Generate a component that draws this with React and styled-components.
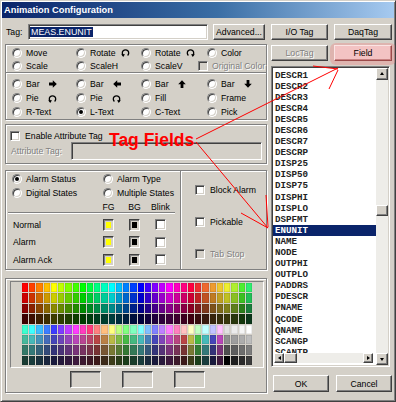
import React from 'react'
import styled, { createGlobalStyle, css } from 'styled-components'

const GlobalStyle = createGlobalStyle`
  html, body { margin: 0; padding: 0; background: #d4d0c8; }
  body {
    font-family: "Liberation Sans", Arial, sans-serif;
    font-size: 8.7px;
    color: #000;
  }
`

const raised = css`
  border: 1px solid;
  border-color: #fff #404040 #404040 #fff;
  box-shadow: inset -1px -1px #808080;
`

const sunken = css`
  border: 1px solid;
  border-color: #808080 #fff #fff #808080;
  box-shadow: inset 1px 1px #404040, inset -1px -1px #d4d0c8;
`

const disabledText = css`
  color: #808080;
  text-shadow: 1px 1px 0 #fff;
`

const Window = styled.div`
  position: relative;
  box-sizing: border-box;
  width: 396px;
  height: 402px;
  padding: 1px;
  background: #d4d0c8;
  border: 1px solid;
  border-color: #d4d0c8 #404040 #404040 #d4d0c8;
  box-shadow: inset 1px 1px #fff, inset -1px -1px #808080;
  display: flex;
  flex-direction: column;
  overflow: hidden;
`

const TitleBar = styled.div`
  height: 16px;
  display: flex;
  align-items: center;
  padding-left: 2px;
  background: linear-gradient(90deg, #0a246a 0%, #3a6ea5 55%, #a6caf0 100%);
  color: #fff;
  font-weight: bold;
  font-size: 9.3px;
`

const Body = styled.div`
  display: flex;
  gap: 4px;
  padding: 6px 2px 0 3px;
`

const LeftCol = styled.div`
  width: 262px;
  display: flex;
  flex-direction: column;
`

const RightCol = styled.div`
  width: 121px;
  display: flex;
  flex-direction: column;
`

const TagRow = styled.div`
  height: 16px;
  display: flex;
  align-items: center;
`

const TagLabel = styled.span`
  width: 22px;
  margin-left: 1px;
`

const TextField = styled.div`
  box-sizing: border-box;
  width: ${p => p.$w || 180}px;
  height: ${p => p.$h || 16}px;
  ${sunken};
  background: ${p => (p.$disabled ? '#d4d0c8' : '#fff')};
  display: flex;
  align-items: center;
  padding-left: 1px;
`

const Selected = styled.span`
  background: #0a246a;
  color: #fff;
  padding: 0 1px;
  line-height: 10px;
  font-size: 8.9px;
`

const Button = styled.div`
  position: relative;
  box-sizing: border-box;
  width: ${p => p.$w}px;
  height: ${p => p.$h || 16}px;
  margin-left: ${p => p.$ml || 0}px;
  ${raised};
  background: #d4d0c8;
  display: flex;
  align-items: center;
  justify-content: center;
  ${p => p.$disabled && disabledText};
  ${p =>
    p.$hot &&
    css`
      background: #f3c3c3;
      border-color: #fbe4e4 #9c4a4a #9c4a4a #fbe4e4;
      box-shadow: inset -1px -1px #c98383;
      &::before {
        content: '';
        position: absolute;
        inset: -3px -5px -5px -5px;
        border-radius: 6px;
        background: rgba(236, 140, 140, 0.42);
        z-index: -1;
      }
    `}
`

const ButtonRow = styled.div`
  display: flex;
  gap: ${p => p.$gap || 6}px;
  justify-content: ${p => (p.$end ? 'flex-end' : 'flex-start')};
  margin-top: ${p => p.$mt || 0}px;
  position: relative;
  z-index: 0;
`

const Panel = styled.div`
  box-sizing: border-box;
  height: ${p => p.$h}px;
  margin-top: ${p => p.$mt}px;
  border: 1px solid #808080;
  box-shadow: inset 1px 1px #fff, 1px 1px #fff;
  padding: ${p => p.$pad || 0};
  display: flex;
  flex-direction: ${p => (p.$row ? 'row' : 'column')};
`

const OptionGrid = styled.div`
  display: grid;
  grid-template-columns: ${p => p.$cols || '64px 65px 66px 1fr'};
  grid-auto-rows: ${p => p.$row}px;
  padding: ${p => p.$pad};
`

const Opt = styled.label`
  display: flex;
  align-items: center;
  gap: 4px;
  white-space: nowrap;
  margin-left: ${p => p.$shift || 0}px;
  ${p => p.$disabled && disabledText};
`

const Radio = styled.span`
  position: relative;
  box-sizing: border-box;
  flex: none;
  width: 10px;
  height: 10px;
  border-radius: 50%;
  background: #fff;
  ${sunken};
  &::after {
    content: '';
    display: ${p => (p.$on ? 'block' : 'none')};
    position: absolute;
    left: 2px;
    top: 2px;
    width: 4px;
    height: 4px;
    border-radius: 50%;
    background: #000;
  }
`

const Check = styled.span`
  box-sizing: border-box;
  flex: none;
  width: 10px;
  height: 10px;
  ${sunken};
  background: ${p => (p.$disabled ? '#d4d0c8' : '#fff')};
`

const Etched = styled.div`
  border-top: 1px solid #808080;
  border-bottom: 1px solid #fff;
`

const VEtched = styled.div`
  width: 0;
  border-left: 1px solid #808080;
  border-right: 1px solid #fff;
`

const Icon = styled.svg`
  flex: none;
  margin-left: ${p => p.$ml || 0}px;
  transform: ${p => p.$t || 'none'};
`

const AttrRow = styled.div`
  display: flex;
  align-items: center;
  gap: 5px;
  height: ${p => p.$h}px;
`

const AttrLabel = styled.span`
  width: 56px;
  margin-left: 1px;
  ${disabledText};
`

const AlarmLeft = styled.div`
  width: 174px;
  display: flex;
  flex-direction: column;
`

const AlarmTable = styled.div`
  margin: 0 5px 0 2px;
`

const TableRow = styled.div`
  display: grid;
  grid-template-columns: 75px 11px 11px 11px;
  column-gap: 15px;
  align-items: center;
  padding-left: 5px;
  height: ${p => p.$h}px;
  ${p =>
    p.$head &&
    css`
      margin-top: 3px;
      border-bottom: 1px solid #808080;
      box-shadow: 0 1px 0 #fff;
      margin-bottom: 3px;
      height: 9px;
      align-items: start;
      line-height: 8px;
    `}
`

const HeadCell = styled.span`
  display: flex;
  justify-content: center;
  white-space: nowrap;
`

const ColorBox = styled.span`
  box-sizing: border-box;
  width: 11px;
  height: 12px;
  border: 1px solid;
  border-color: #404040 #fff #fff #404040;
  box-shadow: inset 1px 1px #808080, inset -1px -1px #d4d0c8;
  padding: 2px;
  background: #d4d0c8;
  &::after {
    content: '';
    display: block;
    width: 100%;
    height: 100%;
    background: ${p => p.$c};
  }
`

const BlinkBox = styled(Check)`
  width: 11px;
  height: 11px;
`

const AlarmRight = styled.div`
  flex: 1;
  display: flex;
  flex-direction: column;
  gap: 20px;
  padding: 13px 0 0 13px;
`

const CheckRow = styled.label`
  display: flex;
  align-items: center;
  gap: 5px;
  height: 12px;
  ${p => p.$disabled && disabledText};
`

const Well = styled.div`
  box-sizing: border-box;
  height: 87px;
  border: 1px solid;
  border-color: #808080 #fff #fff #808080;
  padding-top: 1px;
`

const Palette = styled.div`
  width: 230px;
  height: 82px;
  margin: 0 auto;
  display: grid;
  grid-template-columns: repeat(32, 1fr);
  grid-template-rows: repeat(8, 1fr);
  gap: 1px;
`

const Swatch = styled.span`
  background: ${p => p.$c};
  box-shadow: inset 0 0 0 0.5px rgba(0, 0, 0, 0.15);
`

const PreviewRow = styled.div`
  display: flex;
  justify-content: center;
  gap: 21px;
  margin-top: 3px;
`

const Preview = styled.div`
  box-sizing: border-box;
  width: 31px;
  height: 17px;
  border: 1px solid;
  border-color: #404040 #fff #fff #404040;
  box-shadow: inset 1px 1px #808080;
`

const ListFrame = styled.div`
  box-sizing: border-box;
  width: 119px;
  height: 301px;
  margin-top: 5px;
  ${sunken};
  background: #fff;
  display: flex;
  padding: 1px;
`

const ItemsCol = styled.div`
  flex: 1;
  min-width: 0;
  min-height: 0;
  display: flex;
  flex-direction: column;
`

const Items = styled.div`
  flex: 1 1 0;
  min-height: 0;
  overflow: hidden;
  padding-top: 1.5px;
`

const Item = styled.div`
  height: 11.1px;
  line-height: 11.1px;
  padding-left: 2px;
  font-family: "Liberation Mono", "Courier New", monospace;
  font-weight: bold;
  font-size: 9.2px;
  color: #222;
  ${p =>
    p.$sel &&
    css`
      background: #0a246a;
      color: #fff;
    `}
`

const ScrollTrack = styled.div`
  flex: none;
  display: flex;
  flex-direction: ${p => (p.$v ? 'column' : 'row')};
  ${p => (p.$v ? 'width: 12px;' : 'height: 10px; margin: 0 3px 2px 1px;')}
  background: #eeede9;
`

const ScrollBtn = styled.div`
  box-sizing: border-box;
  flex: none;
  width: ${p => p.$s}px;
  height: ${p => p.$s}px;
  ${raised};
  background: #d4d0c8;
  display: flex;
  align-items: center;
  justify-content: center;
`

const Thumb = styled.div`
  box-sizing: border-box;
  flex: none;
  ${p => (p.$v ? `height: 11px; margin-top: ${p.$at}px;` : `width: 13px;`)}
  ${raised};
  background: #d4d0c8;
`

const Spacer = styled.div`
  flex: 1;
`

const Tri = styled.span`
  width: 0;
  height: 0;
  border: 2.5px solid transparent;
  ${p => p.$d === 'up' && 'border-bottom: 3px solid #000; border-top-width: 0; margin-top: -1px;'}
  ${p => p.$d === 'down' && 'border-top: 3px solid #000; border-bottom-width: 0;'}
  ${p => p.$d === 'left' && 'border-right: 3px solid #000; border-left-width: 0;'}
  ${p => p.$d === 'right' && 'border-left: 3px solid #000; border-right-width: 0;'}
`

const Overlay = styled.svg`
  position: absolute;
  left: 0;
  top: 0;
  pointer-events: none;
`

const Callout = styled.div`
  position: absolute;
  left: 108px;
  top: 131px;
  font-family: "Liberation Sans", Arial, sans-serif;
  font-weight: bold;
  font-size: 17.5px;
  line-height: 1;
  color: #ff0000;
  white-space: nowrap;
`

const Rot = ({ cw }) => (
  <Icon width="9" height="9" viewBox="0 0 9 9" $ml={1} $t={cw ? 'scaleX(-1)' : 'none'}>
    <path d="M6.6 7.4 A3.2 3.2 0 1 0 2.4 7.4" fill="none" stroke="#000" strokeWidth="1.3" />
    <polygon points="0.2,6.2 4,6.2 2.2,9" fill="#000" />
  </Icon>
)

const Arrow = ({ rot }) => (
  <Icon width="8" height="8" viewBox="0 0 8 8" $ml={5} $t={`rotate(${rot}deg)`}>
    <polygon points="0,2.6 3.8,2.6 3.8,0.2 7.8,4 3.8,7.8 3.8,5.4 0,5.4" fill="#000" />
  </Icon>
)

const PieIcon = ({ cw }) => (
  <Icon width="9" height="9" viewBox="0 0 9 9" $ml={5} $t={cw ? 'scaleX(-1)' : 'none'}>
    <path d="M6.6 7.4 A3.2 3.2 0 1 0 2.4 7.4" fill="none" stroke="#000" strokeWidth="1.3" />
    <polygon points="0.2,6.2 4,6.2 2.2,9" fill="#000" />
  </Icon>
)

const hues24 = Array.from({ length: 24 }, (_, i) => i * 15)
const tail8 = [0, 18, 34, 48, 60, 80, 110, 140]
const pastel = [
  [165, 62], [180, 62], [200, 62], [220, 62], [240, 62], [260, 62], [280, 62], [300, 62], [320, 62], [340, 62],
  [0, 75], [30, 75], [60, 75], [90, 75], [120, 75], [150, 75], [180, 75], [210, 75], [240, 75], [270, 75], [300, 75], [330, 75],
  [0, 88], [60, 88], [120, 88], [180, 88], [240, 88], [300, 88],
]
const vivid = (l, s2, l2) => [
  ...hues24.map(h => `hsl(${h},100%,${l}%)`),
  ...tail8.map(h => `hsl(${h},${s2}%,${l2}%)`),
]
const muted = (s, l, greys) => [
  ...pastel.map(([h]) => `hsl(${h},${s}%,${l}%)`),
  ...greys.map(g => `hsl(0,0%,${g}%)`),
]
const palette = [
  ...vivid(50, 85, 56),
  ...vivid(40, 70, 44),
  ...vivid(27, 65, 30),
  ...vivid(12, 65, 13),
  ...pastel.map(([h, l]) => `hsl(${h},100%,${l}%)`), 'hsl(0,0%,88%)', 'hsl(0,0%,92%)', 'hsl(0,0%,96%)', '#fff',
  ...muted(45, 50, [56, 62, 68, 74]),
  ...muted(40, 34, [31, 37, 43, 49]),
  ...muted(40, 17, [0, 12, 17, 23]),
]

const fields = [
  'DESCR1', 'DESCR2', 'DESCR3', 'DESCR4', 'DESCR5', 'DESCR6', 'DESCR7', 'DESCRP',
  'DISP25', 'DISP50', 'DISP75', 'DISPHI', 'DISPLO', 'DSPFMT', 'ENUNIT', 'NAME',
  'NODE', 'OUTPHI', 'OUTPLO', 'PADDRS', 'PDESCR', 'PNAME', 'QCODE', 'QNAME',
  'SCANGP', 'SCANTP',
]

const alarms = ['Normal', 'Alarm', 'Alarm Ack']

const App = () => (
  <>
    <GlobalStyle />
    <Window>
      <TitleBar>Animation Configuration</TitleBar>
      <Body>
        <LeftCol>
          <TagRow>
            <TagLabel>Tag:</TagLabel>
            <TextField $w={180}>
              <Selected>MEAS.ENUNIT</Selected>
            </TextField>
            <Button $w={52} $ml={5}>Advanced...</Button>
          </TagRow>

          <Panel $h={76} $mt={4}>
            <OptionGrid $row={13} $pad="1px 0 0 6px">
              <Opt><Radio />Move</Opt>
              <Opt><Radio /><span>Rotate</span><Rot /></Opt>
              <Opt><Radio /><span>Rotate</span><Rot cw /></Opt>
              <Opt><Radio />Color</Opt>
              <Opt><Radio />Scale</Opt>
              <Opt><Radio />ScaleH</Opt>
              <Opt><Radio />ScaleV</Opt>
              <Opt $shift={-9} $disabled><Check $disabled />Original Color</Opt>
            </OptionGrid>
            <Etched />
            <OptionGrid $row={14} $pad="3px 0 0 6px">
              <Opt><Radio /><span>Bar</span><Arrow rot={0} /></Opt>
              <Opt><Radio /><span>Bar</span><Arrow rot={180} /></Opt>
              <Opt><Radio /><span>Bar</span><Arrow rot={-90} /></Opt>
              <Opt><Radio /><span>Bar</span><Arrow rot={90} /></Opt>
              <Opt><Radio /><span>Pie</span><PieIcon /></Opt>
              <Opt><Radio /><span>Pie</span><PieIcon cw /></Opt>
              <Opt><Radio />Fill</Opt>
              <Opt><Radio />Frame</Opt>
              <Opt><Radio />R-Text</Opt>
              <Opt><Radio $on />L-Text</Opt>
              <Opt><Radio />C-Text</Opt>
              <Opt><Radio />Pick</Opt>
            </OptionGrid>
          </Panel>

          <Panel $h={40} $mt={4} $pad="5px 4px 0 4px">
            <AttrRow $h={12}>
              <Check />Enable Attribute Tag
            </AttrRow>
            <AttrRow $h={18}>
              <AttrLabel>Attribute Tag:</AttrLabel>
              <TextField $w={195} $h={18} $disabled />
            </AttrRow>
          </Panel>

          <Panel $h={100} $mt={6} $row>
            <AlarmLeft>
              <OptionGrid $cols="91px 1fr" $row={14} $pad="1px 0 0 6px">
                <Opt><Radio $on />Alarm Status</Opt>
                <Opt><Radio />Alarm Type</Opt>
                <Opt><Radio />Digital States</Opt>
                <Opt><Radio />Multiple States</Opt>
              </OptionGrid>
              <AlarmTable>
                <TableRow $head>
                  <span />
                  <HeadCell>FG</HeadCell>
                  <HeadCell>BG</HeadCell>
                  <HeadCell>Blink</HeadCell>
                </TableRow>
                {alarms.map(a => (
                  <TableRow key={a} $h={17.5}>
                    <span>{a}</span>
                    <ColorBox $c="#ffff00" />
                    <ColorBox $c="#000" />
                    <BlinkBox />
                  </TableRow>
                ))}
              </AlarmTable>
            </AlarmLeft>
            <VEtched />
            <AlarmRight>
              <CheckRow><Check />Block Alarm</CheckRow>
              <CheckRow><Check />Pickable</CheckRow>
              <CheckRow $disabled><Check $disabled />Tab Stop</CheckRow>
            </AlarmRight>
          </Panel>

          <Panel $h={115} $mt={8} $pad="2px 2px 0 4px">
            <Well>
              <Palette>
                {palette.map((c, i) => (
                  <Swatch key={i} $c={c} />
                ))}
              </Palette>
            </Well>
            <PreviewRow>
              <Preview />
              <Preview />
              <Preview />
            </PreviewRow>
          </Panel>
        </LeftCol>

        <RightCol>
          <ButtonRow>
            <Button $w={57}>I/O Tag</Button>
            <Button $w={58}>DaqTag</Button>
          </ButtonRow>
          <ButtonRow $mt={5}>
            <Button $w={57} $disabled>LocTag</Button>
            <Button $w={58} $hot>Field</Button>
          </ButtonRow>

          <ListFrame>
            <ItemsCol>
              <Items>
                {fields.map(f => (
                  <Item key={f} $sel={f === 'ENUNIT'}>{f}</Item>
                ))}
              </Items>
              <ScrollTrack>
                <ScrollBtn $s={10}><Tri $d="left" /></ScrollBtn>
                <Thumb />
                <Spacer />
                <ScrollBtn $s={10}><Tri $d="right" /></ScrollBtn>
              </ScrollTrack>
            </ItemsCol>
            <ScrollTrack $v>
              <ScrollBtn $s={12}><Tri $d="up" /></ScrollBtn>
              <Thumb $v $at={125} />
              <Spacer />
              <ScrollBtn $s={12}><Tri $d="down" /></ScrollBtn>
            </ScrollTrack>
          </ListFrame>

          <ButtonRow $mt={8} $gap={7} $end>
            <Button $w={56} $h={17}>OK</Button>
            <Button $w={56} $h={17}>Cancel</Button>
          </ButtonRow>
        </RightCol>
      </Body>

      <Overlay width="396" height="402" viewBox="0 0 396 402">
        <g stroke="#ff0000" strokeWidth="1" fill="none">
          <line x1="195" y1="138" x2="337" y2="67" />
          <line x1="312" y1="65" x2="337" y2="68" />
          <line x1="337" y1="69" x2="328" y2="88" />
          <line x1="195" y1="141" x2="267" y2="227" />
          <line x1="240" y1="212" x2="267" y2="227" />
          <line x1="265" y1="194" x2="267" y2="226" />
        </g>
      </Overlay>
      <Callout>Tag Fields</Callout>
    </Window>
  </>
)

export default App
